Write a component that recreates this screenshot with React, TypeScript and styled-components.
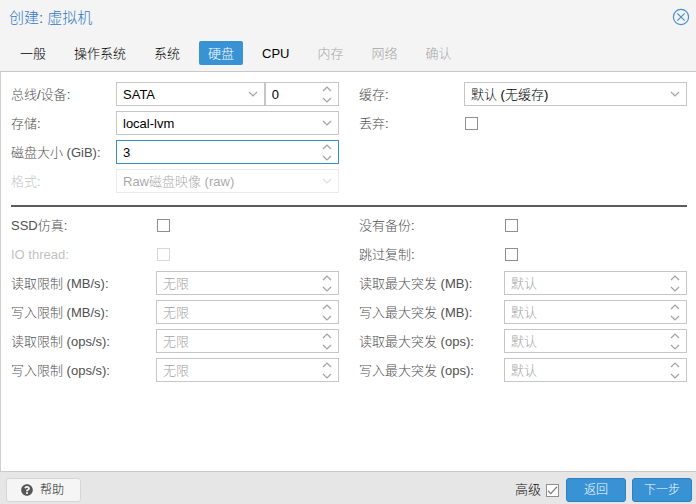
import React, { useState } from "react";
import styled, { createGlobalStyle, css } from "styled-components";
import { FaQuestionCircle } from "react-icons/fa";

const GlobalStyle = createGlobalStyle`
  *, *::before, *::after { box-sizing: border-box; }
  body { margin: 0; background: #fff; }
  body, button, input, select {
    font-family: "Liberation Sans", "Noto Sans CJK SC", sans-serif;
    font-size: 13px;
    line-height: 20px;
  }
`;

const Dialog = styled.main`
  display: flex;
  flex-direction: column;
  min-height: 100vh;
`;

const Header = styled.header`
  padding: 5px 6px 6px 9px;
  background: #f4f4f4;
  border-bottom: 1px solid #c8c8c8;
`;

const TitleRow = styled.div`
  display: flex;
  align-items: center;
  justify-content: space-between;
  height: 24px;
  margin-bottom: 12px;
`;

const Title = styled.h1`
  margin: 0;
  padding-top: 2px;
  font-size: 15px;
  font-weight: 300;
  line-height: 24px;
  color: #2f78c4;
`;

const CloseButton = styled.button`
  display: flex;
  padding: 0;
  border: 0;
  background: none;
  color: #4a8fce;
`;

const TabBar = styled.nav`
  display: flex;
  gap: 10px;
  padding-left: 2px;
`;

const Tab = styled.button<{ $active?: boolean }>`
  height: 24px;
  padding: 3px 9px 1px;
  border: 0;
  border-radius: 2px;
  background: ${(p) => (p.$active ? "#3892d4" : "transparent")};
  color: ${(p) => (p.$active ? "#fff" : "#000")};
  font-weight: 300;

  &:disabled { color: #a6a6a6; }
`;

const Body = styled.form`
  flex: 1;
  padding: 10px 9px 10px 10px;
  background: #fff;
  border-left: 1px solid #cfcfcf;
`;

const Columns = styled.div`
  display: grid;
  grid-template-columns: 1fr 1fr;
  column-gap: 20px;
`;

const Column = styled.div`
  display: flex;
  flex-direction: column;
  gap: 5px;
  min-width: 0;
`;

const Divider = styled.hr`
  height: 2px;
  margin: 12px 0 6px;
  border: 0;
  background: #5c5c5c;
`;

const Row = styled.div<{ $wide?: boolean; $disabled?: boolean }>`
  display: grid;
  grid-template-columns: ${(p) => (p.$wide ? "145px" : "105px")} minmax(0, 1fr);
  align-items: center;
  height: 24px;
  opacity: ${(p) => (p.$disabled ? 0.35 : 1)};
`;

const Label = styled.label`
  padding-top: 2px;
  color: #505050;
  font-weight: 300;
  white-space: nowrap;
`;

const Pair = styled.div`
  display: grid;
  grid-template-columns: 2fr 1fr;
`;

const FieldBox = styled.div<{ $focused?: boolean }>`
  display: flex;
  min-width: 0;
  height: 24px;
  background: #fff;
  border: 1px solid ${(p) => (p.$focused ? "#3d8cc4" : "#c6c6c6")};
`;

const controlText = css`
  min-width: 0;
  height: 22px;
  padding: 0 6px;
  border: 0;
  outline: 0;
  background: transparent;
  color: #000;
  font-weight: 300;
`;

const TextInput = styled.input`
  ${controlText}
  flex: 1;
  &::placeholder { color: #a2a2a2; opacity: 1; }
`;

const NativeSelect = styled.select`
  ${controlText}
  grid-area: 1 / 1;
  width: 100%;
  padding-top: 2px;
  appearance: none;
  opacity: 1;
`;

const SelectBox = styled(FieldBox)`
  display: grid;
  grid-template-columns: minmax(0, 1fr);
`;

const SelectTrigger = styled.span`
  grid-area: 1 / 1;
  display: flex;
  align-items: center;
  justify-self: end;
  justify-content: center;
  width: 22px;
  pointer-events: none;
`;

const SpinnerButtons = styled.div`
  display: grid;
  grid-template-rows: 1fr 1fr;
  width: 22px;
`;

const SpinButton = styled.button<{ $up?: boolean }>`
  display: flex;
  align-items: ${(p) => (p.$up ? "center" : "flex-start")};
  justify-content: center;
  padding: ${(p) => (p.$up ? "0" : "3px 0 0")};
  border: 0;
  background: none;
`;

const CheckInput = styled.input`
  appearance: none;
  width: 13px;
  height: 13px;
  margin: 0 0 0 1px;
  background: #fff;
  border: 1px solid #8f8f8f;

  &:checked {
    background: #fff url("data:image/svg+xml,%3Csvg xmlns='http://www.w3.org/2000/svg' viewBox='0 0 11 11'%3E%3Cpath d='M1 5.8 3.8 8.6 10 1.8' fill='none' stroke='%23808080' stroke-width='1.3'/%3E%3C/svg%3E") center / 11px 11px no-repeat;
  }
`;

const Footer = styled.footer`
  display: flex;
  align-items: center;
  gap: 6px;
  height: 33px;
  padding: 6px 4px 2px 6px;
  background: #e6e6e6;
  border-top: 1px solid #cacaca;
`;

const ActionButton = styled.button<{ $primary?: boolean }>`
  display: flex;
  align-items: center;
  justify-content: center;
  gap: 7px;
  min-width: ${(p) => (p.$primary ? "60px" : "75px")};
  height: 24px;
  padding: ${(p) => (p.$primary ? "0 10px" : "0 12px 0 10px")};
  border: 1px solid ${(p) => (p.$primary ? "#2a80c0" : "#d6d6d6")};
  border-radius: 3px;
  background: ${(p) => (p.$primary ? "#3892d4" : "#f5f5f5")};
  color: ${(p) => (p.$primary ? "#fff" : "#222")};
  font-size: 12px;
  font-weight: 300;

  svg { color: #555; }
`;

const Advanced = styled.label`
  display: flex;
  align-items: center;
  gap: 4px;
  margin-left: auto;
  padding-right: 1px;
  color: #111;
  font-weight: 300;
`;

function Chevron({ up = false }: { up?: boolean }) {
  return (
    <svg width="10" height="6" viewBox="0 0 10 6" fill="none" stroke="#a2a2a2" strokeWidth="1.2" aria-hidden="true">
      <path d={up ? "M1 5 5 1 9 5" : "M1 1 5 5 9 1"} />
    </svg>
  );
}

interface SelectProps { id: string; option: string; disabled?: boolean }

function Select({ id, option, disabled }: SelectProps) {
  return (
    <SelectBox>
      <NativeSelect id={id} disabled={disabled}>
        <option>{option}</option>
      </NativeSelect>
      <SelectTrigger><Chevron /></SelectTrigger>
    </SelectBox>
  );
}

interface SpinnerProps { id: string; initial?: string; placeholder?: string; focused?: boolean; label?: string }

function Spinner({ id, initial = "", placeholder, focused, label }: SpinnerProps) {
  const [value, setValue] = useState(initial);
  const step = (delta: number) => setValue(String(Math.max(0, (Number(value) || 0) + delta)));
  return (
    <FieldBox $focused={focused}>
      <TextInput
        id={id}
        aria-label={label}
        inputMode="numeric"
        placeholder={placeholder}
        value={value}
        onChange={(e) => setValue(e.target.value)}
      />
      <SpinnerButtons>
        <SpinButton $up type="button" tabIndex={-1} aria-label="增加" onClick={() => step(1)}><Chevron up /></SpinButton>
        <SpinButton type="button" tabIndex={-1} aria-label="减少" onClick={() => step(-1)}><Chevron /></SpinButton>
      </SpinnerButtons>
    </FieldBox>
  );
}

interface FieldProps { id: string; label: string; wide?: boolean; disabled?: boolean; children: React.ReactNode }

function Field({ id, label, wide, disabled, children }: FieldProps) {
  return (
    <Row $wide={wide} $disabled={disabled}>
      <Label htmlFor={id}>{label}:</Label>
      {children}
    </Row>
  );
}

const tabs = [
  { name: "一般" },
  { name: "操作系统" },
  { name: "系统" },
  { name: "硬盘", active: true },
  { name: "CPU" },
  { name: "内存", disabled: true },
  { name: "网络", disabled: true },
  { name: "确认", disabled: true },
];

const limits = [
  ["rd-mb", "读取限制 (MB/s)"],
  ["wr-mb", "写入限制 (MB/s)"],
  ["rd-ops", "读取限制 (ops/s)"],
  ["wr-ops", "写入限制 (ops/s)"],
];

const bursts = [
  ["rd-mb-max", "读取最大突发 (MB)"],
  ["wr-mb-max", "写入最大突发 (MB)"],
  ["rd-ops-max", "读取最大突发 (ops)"],
  ["wr-ops-max", "写入最大突发 (ops)"],
];

export default function App() {
  return (
    <>
      <GlobalStyle />
      <Dialog lang="zh-CN">
        <Header>
          <TitleRow>
            <Title>创建: 虚拟机</Title>
            <CloseButton type="button" aria-label="关闭">
              <svg width="18" height="18" viewBox="0 0 18 18" fill="none" stroke="currentColor" strokeWidth="1.2">
                <circle cx="9" cy="9" r="7.6" />
                <path d="M5.3 5.3 12.7 12.7M12.7 5.3 5.3 12.7" />
              </svg>
            </CloseButton>
          </TitleRow>
          <TabBar>
            {tabs.map((t) => (
              <Tab key={t.name} type="button" $active={t.active} disabled={t.disabled}>{t.name}</Tab>
            ))}
          </TabBar>
        </Header>

        <Body>
          <Columns>
            <Column>
              <Field id="bus" label="总线/设备">
                <Pair>
                  <Select id="bus" option="SATA" />
                  <Spinner id="device" initial="0" label="设备" />
                </Pair>
              </Field>
              <Field id="storage" label="存储"><Select id="storage" option="local-lvm" /></Field>
              <Field id="size" label="磁盘大小 (GiB)"><Spinner id="size" initial="3" focused /></Field>
              <Field id="format" label="格式" disabled><Select id="format" option="Raw磁盘映像 (raw)" disabled /></Field>
            </Column>
            <Column>
              <Field id="cache" label="缓存"><Select id="cache" option="默认 (无缓存)" /></Field>
              <Field id="discard" label="丢弃"><CheckInput id="discard" type="checkbox" /></Field>
            </Column>
          </Columns>

          <Divider />

          <Columns>
            <Column>
              <Field wide id="ssd" label="SSD仿真"><CheckInput id="ssd" type="checkbox" /></Field>
              <Field wide id="iothread" label="IO thread" disabled><CheckInput id="iothread" type="checkbox" disabled /></Field>
              {limits.map(([id, label]) => (
                <Field wide key={id} id={id} label={label}><Spinner id={id} placeholder="无限" /></Field>
              ))}
            </Column>
            <Column>
              <Field wide id="nobackup" label="没有备份"><CheckInput id="nobackup" type="checkbox" /></Field>
              <Field wide id="noreplicate" label="跳过复制"><CheckInput id="noreplicate" type="checkbox" /></Field>
              {bursts.map(([id, label]) => (
                <Field wide key={id} id={id} label={label}><Spinner id={id} placeholder="默认" /></Field>
              ))}
            </Column>
          </Columns>
        </Body>

        <Footer>
          <ActionButton type="button"><FaQuestionCircle size={12} />帮助</ActionButton>
          <Advanced>高级<CheckInput type="checkbox" defaultChecked /></Advanced>
          <ActionButton $primary type="button">返回</ActionButton>
          <ActionButton $primary type="button">下一步</ActionButton>
        </Footer>
      </Dialog>
    </>
  );
}
